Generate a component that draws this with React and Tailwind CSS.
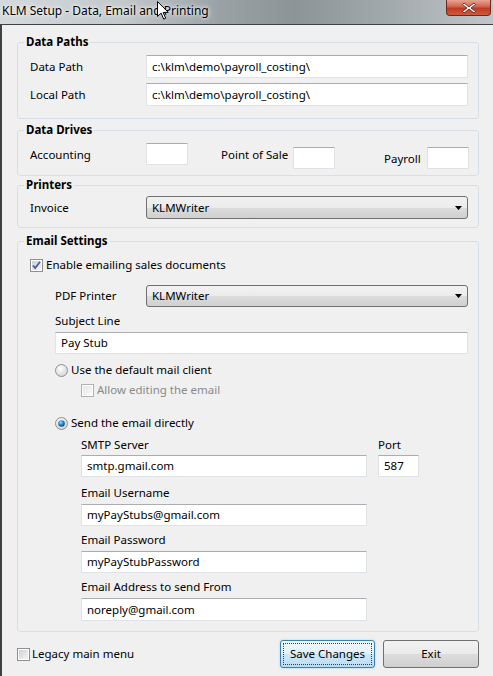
import React from "react";

const font = "font-['Noto_Sans','Open_Sans',sans-serif]";

const Box = ({ children, className = "" }) => (
  <div
    className={`h-[23px] flex items-center pl-[5px] bg-white border border-[#dfe2e6] border-t-[#abadb3] text-black whitespace-nowrap overflow-hidden ${className}`}
  >
    {children}
  </div>
);

const Combo = ({ children, className = "" }) => (
  <div
    className={`h-[23px] flex items-center justify-between pl-[5px] pr-[5px] rounded-[3px] border border-[#707070] bg-[linear-gradient(#f2f2f2,#ebebeb_50%,#dddddd_50%,#cfcfcf)] text-black ${className}`}
  >
    <span>{children}</span>
    <svg width="7" height="4" viewBox="0 0 7 4">
      <path d="M0 0h7L3.5 4z" fill="#000" />
    </svg>
  </div>
);

const Check = ({ checked, disabled }) => (
  <svg width="13" height="13" viewBox="0 0 13 13" className="shrink-0">
    <defs>
      <linearGradient id={disabled ? "cbd" : "cb"} x1="0" y1="0" x2="1" y2="1">
        <stop offset="0" stopColor={disabled ? "#e6e6e6" : "#cbcfd5"} />
        <stop offset="1" stopColor={disabled ? "#fafafa" : "#f6f6f6"} />
      </linearGradient>
    </defs>
    <rect x="0.5" y="0.5" width="12" height="12" fill="#fff" stroke={disabled ? "#b1b1b1" : "#8e8f8f"} />
    <rect x="2" y="2" width="9" height="9" fill={`url(#${disabled ? "cbd" : "cb"})`} />
    {checked && (
      <path d="M3 6.5l2.2 2.6L10 2.8" fill="none" stroke="#4a5f97" strokeWidth="1.8" />
    )}
  </svg>
);

const Radio = ({ checked }) => (
  <svg width="13" height="13" viewBox="0 0 13 13" className="shrink-0">
    <defs>
      <radialGradient id="rb" cx="0.4" cy="0.35" r="0.7">
        <stop offset="0" stopColor="#ffffff" />
        <stop offset="1" stopColor="#cfd2d6" />
      </radialGradient>
      <radialGradient id="rdot" cx="0.4" cy="0.35" r="0.7">
        <stop offset="0" stopColor="#a6e0fa" />
        <stop offset="0.5" stopColor="#1b8ad1" />
        <stop offset="1" stopColor="#0b3e6d" />
      </radialGradient>
    </defs>
    <circle cx="6.5" cy="6.5" r="6" fill="url(#rb)" stroke="#8e8f8f" />
    {checked && <circle cx="6.5" cy="6.5" r="3.3" fill="url(#rdot)" />}
  </svg>
);

const Group = ({ title, children, className = "" }) => (
  <fieldset className={`border border-[#d5dfe5] rounded-[3px] p-0 ${className}`}>
    <legend className="ml-[6px] px-[2px] font-bold leading-[16px]">{title}</legend>
    {children}
  </fieldset>
);

export default function App() {
  return (
    <div className={`w-[493px] h-[676px] bg-[#f0f0f0] text-[11.5px] leading-[16px] text-black ${font} overflow-hidden`}>
      {/* title bar */}
      <div className="relative h-[24px] flex justify-between bg-[linear-gradient(90deg,#d3d9dc_0%,#c2c8cb_25%,#9aa1a5_45%,#8d9498_60%,#a4abaf_80%,#c0c6c9_100%)]">
        <div className="pl-[2px] pt-[3px] text-[12px] text-black [text-shadow:0_0_6px_#fff,0_0_3px_#fff]">
          KLM Setup - Data, Email and Printing
        </div>
        <div className="mr-[2px] w-[45px] h-[16px] rounded-b-[4px] border border-t-0 border-[#6b2a21] bg-[linear-gradient(#e8a493,#d0624c_45%,#c0391f_55%,#d05a3e)] flex items-center justify-center">
          <svg width="14" height="12" viewBox="0 0 14 12">
            <path d="M2 1l5 4 5-4 1.5 1.5-4.5 3.5 4.5 3.5L12 11 7 7 2 11 .5 9.5 5 6 .5 2.5z" fill="#fff" stroke="#4b1a14" strokeWidth="0.8" />
          </svg>
        </div>
        <svg className="absolute left-[157px] top-[1px]" width="12" height="19" viewBox="0 0 12 19">
          <path d="M.5.5v15l3.6-3.4 2.6 6 2-.9-2.6-5.8h5.2z" fill="#fff" stroke="#000" strokeWidth="1" />
        </svg>
      </div>

      {/* body */}
      <div className="h-[652px] border-t border-l-2 border-[#3d4245] pt-[9px] pl-[15px] pr-[14px]">
        <Group title="Data Paths">
          <div className="pt-[5px] pb-[12px] pl-[12px] pr-[10px] flex flex-col gap-[5px]">
            <div className="flex items-center">
              <div className="w-[116px]">Data Path</div>
              <Box className="flex-1">c:\klm\demo\payroll_costing\</Box>
            </div>
            <div className="flex items-center">
              <div className="w-[116px]">Local Path</div>
              <Box className="flex-1">c:\klm\demo\payroll_costing\</Box>
            </div>
          </div>
        </Group>

        <Group title="Data Drives" className="mt-[3px]">
          <div className="flex items-start pl-[12px] h-[37px]">
            <div className="w-[116px] mt-[9px]">Accounting</div>
            <Box className="w-[42px] mt-[5px] !h-[22px]" />
            <div className="ml-[33px] w-[72px] mt-[9px]">Point of Sale</div>
            <Box className="w-[42px] mt-[9px] !h-[22px]" />
            <div className="ml-[49px] w-[43px] mt-[13px]">Payroll</div>
            <Box className="w-[42px] mt-[9px] !h-[22px]" />
          </div>
        </Group>

        <Group title="Printers" className="mt-[1px]">
          <div className="flex items-center pl-[12px] pr-[10px] pt-[3px] pb-[8px]">
            <div className="w-[116px]">Invoice</div>
            <Combo className="flex-1">KLMWriter</Combo>
          </div>
        </Group>

        <Group title="Email Settings" className="mt-[5px]">
          <div className="pl-[12px] pr-[10px] pb-[10px] flex flex-col">
            <div className="mt-[8px] flex items-center gap-[3px]">
              <Check checked />
              <span>Enable emailing sales documents</span>
            </div>
            <div className="mt-[12px] ml-[25px] flex items-center">
              <div className="w-[91px]">PDF Printer</div>
              <Combo className="flex-1 !h-[22px]">KLMWriter</Combo>
            </div>
            <div className="mt-[6px] ml-[25px]">Subject Line</div>
            <Box className="mt-[3px] ml-[25px] !h-[22px]">Pay Stub</Box>

            <div className="mt-[8px] ml-[25px] flex items-center gap-[3px]">
              <Radio />
              <span>Use the default mail client</span>
            </div>
            <div className="mt-[4px] ml-[51px] flex items-center gap-[3px] text-[#8a8a8a]">
              <Check disabled />
              <span>Allow editing the email</span>
            </div>
            <div className="mt-[17px] ml-[25px] flex items-center gap-[3px]">
              <Radio checked />
              <span>Send the email directly</span>
            </div>

            <div className="ml-[51px] flex flex-col">
              <div className="mt-[6px] flex gap-[11px]">
                <div className="w-[286px]">SMTP Server</div>
                <div>Port</div>
              </div>
              <div className="mt-[2px] flex gap-[11px]">
                <Box className="w-[286px] !h-[22px]">smtp.gmail.com</Box>
                <Box className="w-[41px] !h-[22px]">587</Box>
              </div>
              <div className="mt-[8px]">Email Username</div>
              <Box className="mt-[3px] w-[286px] !h-[22px]">myPayStubs@gmail.com</Box>
              <div className="mt-[6px]">Email Password</div>
              <Box className="mt-[3px] w-[286px] !h-[22px]">myPayStubPassword</Box>
              <div className="mt-[6px]">Email Address to send From</div>
              <Box className="mt-[3px] w-[286px]">noreply@gmail.com</Box>
            </div>
          </div>
        </Group>

        {/* footer */}
        <div className="mt-[8px] flex items-center justify-between">
          <div className="flex items-center gap-[2px]">
            <Check />
            <span>Legacy main menu</span>
          </div>
          <div className="flex gap-[8px]">
            <div className="w-[95px] h-[28px] rounded-[3px] border border-[#3c7fb1] shadow-[0_0_2px_#7ad5ff] bg-[linear-gradient(#f1f8fd,#e2f1fb_50%,#cfe8f7_50%,#b9dcf1)] p-[2px]">
              <div className="h-full border border-dotted border-[#4a3a3a] flex items-center justify-center">
                Save Changes
              </div>
            </div>
            <div className="w-[96px] h-[28px] rounded-[3px] border border-[#707070] bg-[linear-gradient(#f2f2f2,#ebebeb_50%,#dddddd_50%,#cfcfcf)] flex items-center justify-center">
              Exit
            </div>
          </div>
        </div>
      </div>
    </div>
  );
}
